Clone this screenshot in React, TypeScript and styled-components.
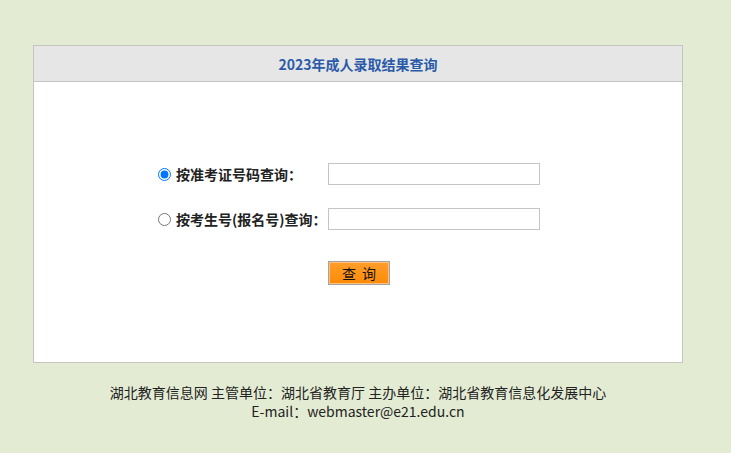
import React, { useState } from 'react';
import styled, { createGlobalStyle } from 'styled-components';

const GlobalStyle = createGlobalStyle`
  html, body {
    margin: 0;
    padding: 0;
    background: #e3ecd3;
  }
  body {
    font-family: "Noto Sans CJK SC", "Noto Sans", sans-serif;
    color: #222;
  }
`;

const Page = styled.div`
  padding: 45px 0 0 33px;
`;

const Panel = styled.div`
  width: 650px;
  box-sizing: border-box;
  border: 1px solid #c4c4c4;
  background: #fff;
`;

const PanelHeader = styled.div`
  height: 35px;
  background: #e6e6e6;
  border-bottom: 1px solid #c4c4c4;
  display: flex;
  align-items: center;
  justify-content: center;
  font-size: 14px;
  font-weight: bold;
  color: #2b5ba8;
`;

const PanelBody = styled.div`
  height: 280px;
  box-sizing: border-box;
  padding: 81px 0 0 124px;
`;

const Form = styled.div`
  display: grid;
  grid-template-columns: 170px 212px;
  row-gap: 23px;
  align-items: center;
`;

const Label = styled.label`
  display: flex;
  align-items: center;
  font-size: 14px;
  font-weight: bold;
  color: #222;
  cursor: pointer;
`;

const Radio = styled.input`
  width: 13px;
  height: 13px;
  margin: 0 5px 0 0;
`;

const TextInput = styled.input`
  width: 212px;
  height: 22px;
  box-sizing: border-box;
  border: 1px solid #c4c4c4;
  padding: 0 4px;
  font-size: 13px;
  outline: none;
`;

const ButtonCell = styled.div`
  grid-column: 2;
  padding-top: 7px;
`;

const SearchButton = styled.button`
  width: 62px;
  height: 24px;
  border: 1px solid #a3a3a3;
  box-shadow: inset 0 0 0 1px #ffc07a;
  background: linear-gradient(#ff9e2c, #ff8a05);
  font-family: "Noto Sans CJK SC", sans-serif;
  font-size: 14px;
  color: #111;
  padding: 0;
  letter-spacing: 6px;
  text-indent: 6px;
  cursor: pointer;
`;

const Footer = styled.div`
  width: 650px;
  padding-top: 20px;
  text-align: center;
  font-size: 14px;
  color: #222;
`;

const FooterLine = styled.div`
  line-height: 19px;
`;

const options = [
  { id: 'ksh', text: '按准考证号码查询：' },
  { id: 'bmh', text: '按考生号(报名号)查询：' },
];

export default function App() {
  const [mode, setMode] = useState('ksh');
  return (
    <Page>
      <GlobalStyle />
      <Panel>
        <PanelHeader>2023年成人录取结果查询</PanelHeader>
        <PanelBody>
          <Form>
            {options.map((o) => (
              <React.Fragment key={o.id}>
                <Label>
                  <Radio
                    type="radio"
                    name="mode"
                    checked={mode === o.id}
                    onChange={() => setMode(o.id)}
                  />
                  {o.text}
                </Label>
                <TextInput type="text" />
              </React.Fragment>
            ))}
            <ButtonCell>
              <SearchButton>查询</SearchButton>
            </ButtonCell>
          </Form>
        </PanelBody>
      </Panel>
      <Footer>
        <FooterLine>湖北教育信息网 主管单位：湖北省教育厅 主办单位：湖北省教育信息化发展中心</FooterLine>
        <FooterLine>E-mail：webmaster@e21.edu.cn</FooterLine>
      </Footer>
    </Page>
  );
}
